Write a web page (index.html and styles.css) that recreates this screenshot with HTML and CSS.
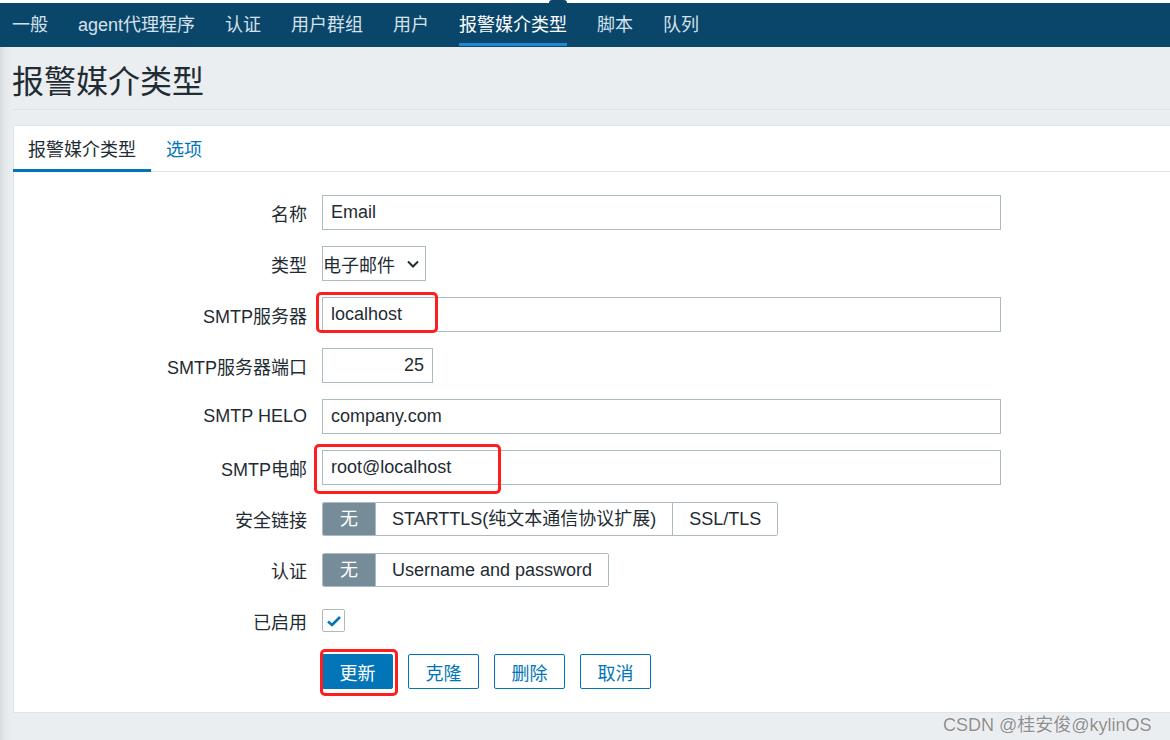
FILE: index.html
```html
<!DOCTYPE html>
<html lang="zh-CN">
<head>
<meta charset="utf-8">
<title>报警媒介类型</title>
<link rel="stylesheet" href="styles.css">
</head>
<body>
<div class="topstrip"><span class="notch"></span></div>
<nav class="topnav">
  <a href="#">一般</a>
  <a href="#">agent代理程序</a>
  <a href="#">认证</a>
  <a href="#">用户群组</a>
  <a href="#">用户</a>
  <a href="#" class="active">报警媒介类型</a>
  <a href="#">脚本</a>
  <a href="#">队列</a>
</nav>
<header class="page-header"><h1>报警媒介类型</h1></header>
<main class="card">
  <div class="tabs">
    <a href="#" class="tab active">报警媒介类型</a>
    <a href="#" class="tab">选项</a>
  </div>
  <form class="form">
    <label class="label">名称</label>
    <div class="field"><input class="input wide" type="text" value="Email"></div>

    <label class="label">类型</label>
    <div class="field">
      <div class="select"><span>电子邮件</span>
        <svg class="chev" width="14" height="10" viewBox="0 0 14 10"><polyline points="2,2.5 7,7.5 12,2.5" fill="none" stroke="#1f2c33" stroke-width="2"/></svg>
      </div>
    </div>

    <label class="label">SMTP服务器</label>
    <div class="field"><input class="input wide" type="text" value="localhost"><span class="mark mark-host"></span></div>

    <label class="label">SMTP服务器端口</label>
    <div class="field"><input class="input port" type="text" value="25"></div>

    <label class="label">SMTP HELO</label>
    <div class="field"><input class="input wide" type="text" value="company.com"></div>

    <label class="label">SMTP电邮</label>
    <div class="field"><input class="input wide" type="text" value="root@localhost"><span class="mark mark-email"></span></div>

    <label class="label">安全链接</label>
    <div class="field">
      <div class="segmented">
        <span class="seg on">无</span>
        <span class="seg">STARTTLS(纯文本通信协议扩展)</span>
        <span class="seg">SSL/TLS</span>
      </div>
    </div>

    <label class="label">认证</label>
    <div class="field">
      <div class="segmented">
        <span class="seg on">无</span>
        <span class="seg">Username and password</span>
      </div>
    </div>

    <label class="label">已启用</label>
    <div class="field">
      <span class="checkbox"><svg width="16" height="14" viewBox="0 0 16 14"><polyline points="2,7.5 6,11 14,3" fill="none" stroke="#0275b8" stroke-width="2.6"/></svg></span>
    </div>

    <span class="label"></span>
    <div class="buttons">
      <span class="btn-wrap"><button type="button" class="btn primary">更新</button><span class="mark mark-btn"></span></span>
      <button type="button" class="btn">克隆</button>
      <button type="button" class="btn">删除</button>
      <button type="button" class="btn">取消</button>
    </div>
  </form>
</main>
<div class="watermark">CSDN @桂安俊@kylinOS</div>
</body>
</html>
```
FILE: styles.css
```css
* { box-sizing: border-box; }
html, body { margin: 0; padding: 0; overflow: hidden; }
body {
  width: 1170px;
  height: 740px;
  position: relative;
  font-family: "Liberation Sans", Arial, "Noto Sans CJK SC", sans-serif;
  color: #1f2c33;
  background: linear-gradient(to right, #d9dde0 0, #e7eaed 6px, #ebeef0 12px);
}
.topstrip { height: 3px; background: #fff; position: relative; }
.notch {
  position: absolute; left: 549px; top: 0; width: 18px; height: 3px;
  background: #0a466a; border-radius: 9px 9px 0 0;
}
.topnav {
  display: flex;
  height: 44px;
  background: #0a466a;
}
.topnav a {
  font-size: 18px;
  color: #d5e1ea;
  text-decoration: none;
  margin: 0 15px;
  height: 43px;
  line-height: 44px;
  border-bottom: 3px solid transparent;
  white-space: nowrap;
}
.topnav a:first-child { margin-left: 12px; }
.topnav a.active { color: #fff; border-bottom-color: #1f87d4; }

.page-header {
  margin-left: 12px;
  height: 63px;
  border-bottom: 1px solid #dfe4e7;
}
.page-header h1 {
  margin: 0;
  padding-top: 7px;
  font-size: 32px;
  font-weight: normal;
  line-height: 56px;
  color: #1f2c33;
}

.card {
  margin: 15px 0 0 13px;
  background: #fff;
  border: 1px solid #dfe4e7;
  border-right: none;
  height: 588px;
}
.tabs {
  display: flex;
  height: 46px;
  border-bottom: 1px solid #dfe4e7;
}
.tab {
  font-size: 18px;
  padding: 0 15px;
  height: 46px;
  line-height: 48px;
  text-decoration: none;
  color: #0275b8;
  border-bottom: 3px solid transparent;
  margin-bottom: -1px;
}
.tab.active { color: #1f2c33; border-bottom-color: #0275b8; margin-left: -1px; padding-left: 15px; }

.form {
  display: grid;
  grid-template-columns: 293px 1fr;
  column-gap: 15px;
  row-gap: 16px;
  align-items: center;
  padding-top: 23px;
}
.label {
  font-size: 18px;
  text-align: right;
  white-space: nowrap;
}
.field { position: relative; height: 35px; display: flex; align-items: center; }
.input {
  height: 35px;
  border: 1px solid #acbbc2;
  border-radius: 0;
  padding: 0 8px;
  font-family: inherit;
  font-size: 18px;
  color: #1f2c33;
  background: #fff;
  outline: none;
}
.input.wide { width: 679px; }
.input.port { width: 111px; text-align: right; }

.select {
  width: 104px;
  height: 35px;
  border: 1px solid #acbbc2;
  display: flex;
  align-items: center;
  padding-left: 0;
  font-size: 18px;
  gap: 11px;
}
.chev { display: block; margin-top: 1px; }

.segmented {
  display: inline-flex;
  height: 34px;
  border: 1px solid #acbbc2;
  border-radius: 2px;
  overflow: hidden;
}
.seg {
  font-size: 18px;
  line-height: 32px;
  padding: 0 16px;
  white-space: nowrap;
  border-left: 1px solid #acbbc2;
  background: #fff;
}
.seg:first-child { border-left: none; }
.seg.on { background: #768d99; color: #fff; padding: 0 17px; }

.checkbox {
  width: 23px;
  height: 23px;
  border: 1px solid #acbbc2;
  border-radius: 2px;
  display: flex;
  align-items: center;
  justify-content: center;
}

.buttons { display: flex; gap: 15px; height: 35px; }
.btn-wrap { position: relative; display: inline-block; }
.btn {
  height: 35px;
  width: 71px;
  padding: 0;
  font-family: inherit;
  font-size: 18px;
  border: 1px solid #0275b8;
  border-radius: 2px;
  background: #fff;
  color: #0275b8;
}
.btn.primary { background: #0275b8; color: #fff; }

.mark {
  position: absolute;
  border: 3px solid #ff1e1e;
  border-radius: 5px;
  pointer-events: none;
}
.mark-host { left: -6px; top: -5px; width: 122px; height: 41px; }
.mark-email { left: -8px; top: -6px; width: 187px; height: 50px; }
.mark-btn { left: -2px; top: -5px; width: 78px; height: 47px; }

.watermark {
  position: absolute;
  left: 943px;
  top: 710px;
  font-size: 18px;
  color: #8e8e8e;
  text-shadow: 0 0 1px #fff, 0 0 1px #fff;
  white-space: nowrap;
}
```
